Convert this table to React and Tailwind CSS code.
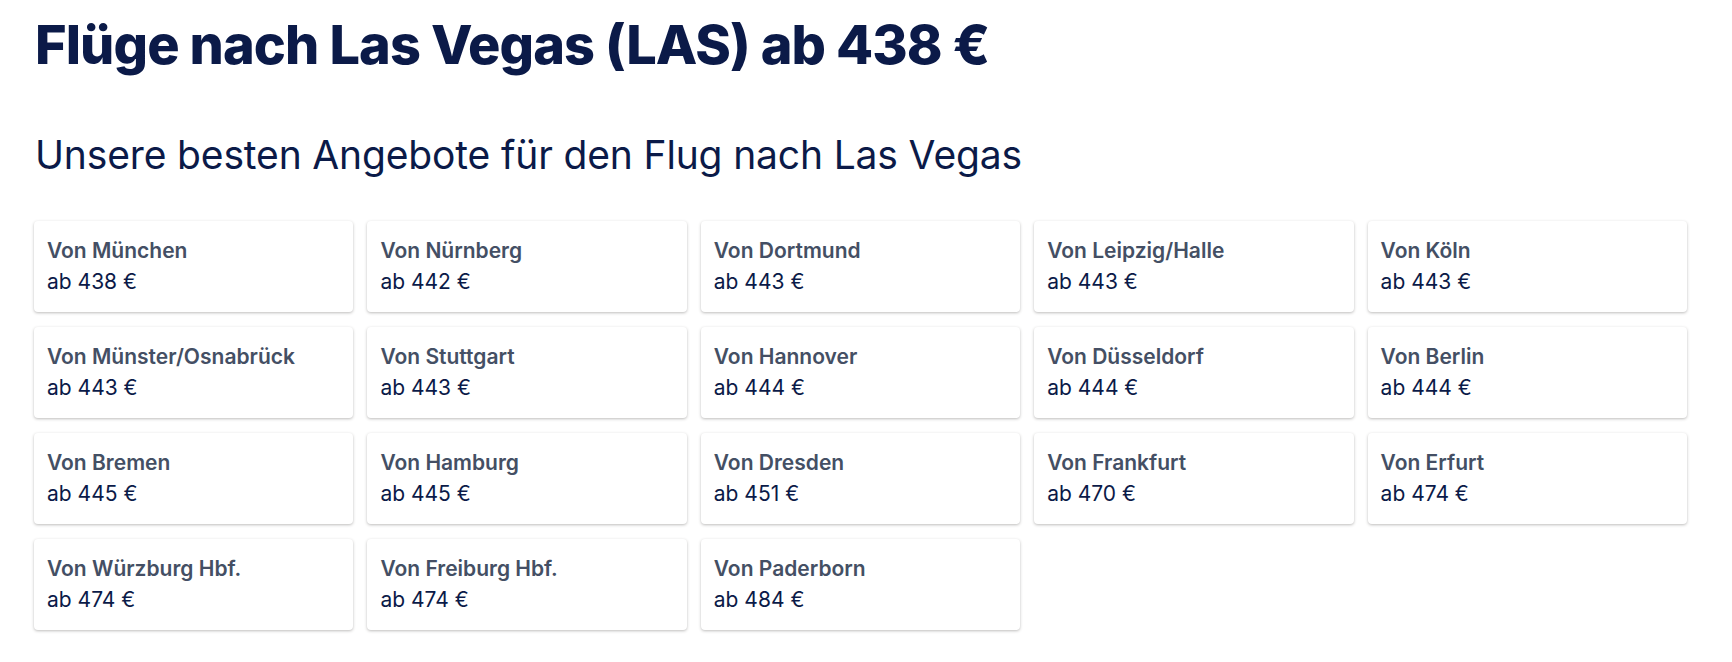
import React from 'react';

const deals = [
  { city: 'München', price: 438 },
  { city: 'Nürnberg', price: 442 },
  { city: 'Dortmund', price: 443 },
  { city: 'Leipzig/Halle', price: 443 },
  { city: 'Köln', price: 443 },
  { city: 'Münster/Osnabrück', price: 443 },
  { city: 'Stuttgart', price: 443 },
  { city: 'Hannover', price: 444 },
  { city: 'Düsseldorf', price: 444 },
  { city: 'Berlin', price: 444 },
  { city: 'Bremen', price: 445 },
  { city: 'Hamburg', price: 445 },
  { city: 'Dresden', price: 451 },
  { city: 'Frankfurt', price: 470 },
  { city: 'Erfurt', price: 474 },
  { city: 'Würzburg Hbf.', price: 474 },
  { city: 'Freiburg Hbf.', price: 474 },
  { city: 'Paderborn', price: 484 },
];

function DealCard({ city, price }) {
  return (
    <a
      href="#"
      className="block h-[91px] rounded-[4px] bg-white px-[13px] pt-[14px] shadow-[0_1px_3px_0_rgba(37,32,31,0.3)]"
    >
      <p className="text-[21px] leading-[31px] font-semibold text-[#444f64]">Von {city}</p>
      <p className="text-[21px] leading-[31px] font-normal text-[#0b1a48]">ab {price} €</p>
    </a>
  );
}

export default function App() {
  return (
    <div className="min-h-screen bg-white font-['Inter',sans-serif] text-[#0b1a48]">
      <div className="w-[1653px] pl-[34px] box-content pt-[13px]">
        <h1 className="ml-[1px] text-[54px] leading-[64px] font-extrabold tracking-[-0.9px] text-[#0b1a48]">
          Flüge nach Las Vegas (LAS) ab 438 €
        </h1>
        <h2 className="mt-[54px] ml-[1px] text-[39px] leading-[47px] font-normal tracking-[-0.15px] text-[#0b1a48]">
          Unsere besten Angebote für den Flug nach Las Vegas
        </h2>
        <div className="mt-[43px] grid grid-cols-5 gap-x-[14px] gap-y-[15px]">
          {deals.map((d) => (
            <DealCard key={d.city} city={d.city} price={d.price} />
          ))}
        </div>
      </div>
    </div>
  );
}
